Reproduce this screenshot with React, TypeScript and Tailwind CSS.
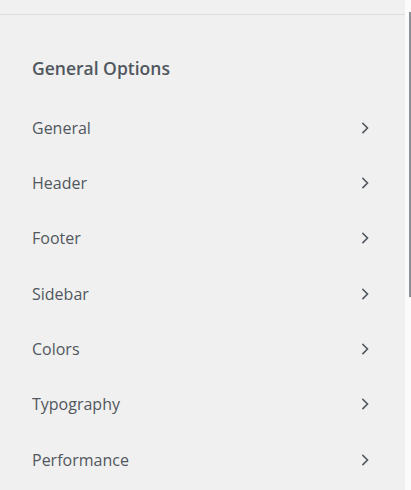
import React from 'react';

const items = ['General', 'Header', 'Footer', 'Sidebar', 'Colors', 'Typography', 'Performance'];

const Chevron = () => (
  <svg width="10" height="12" viewBox="0 0 10 12" fill="none" className="text-[#50575e]">
    <path d="M3 1.5l4.5 4.5-4.5 4.5" stroke="currentColor" strokeWidth="1.6" strokeLinecap="square" />
  </svg>
);

export default function App() {
  return (
    <div className="relative flex w-[411px] h-[490px] overflow-hidden bg-[#fbfbfb] font-['Open_Sans',sans-serif]">
      {/* customizer panel */}
      <div className="w-[405px] h-full bg-[#f0f0f0] flex flex-col">
        <div className="h-[15px] border-b border-[#dcdcde]" />
        <h3 className="pl-[32px] pt-[41px] pb-[20px] text-[17.5px] leading-[24px] font-semibold text-[#50575e]">
          General Options
        </h3>
        <ul>
          {items.map((item) => (
            <li
              key={item}
              className="h-[55.33px] flex items-center justify-between pl-[32px] pr-[35px] text-[16px] text-[#50575e]"
            >
              <span>{item}</span>
              <Chevron />
            </li>
          ))}
        </ul>
      </div>
      {/* scrollbar thumb */}
      <div className="absolute left-[409px] top-[12px] w-[2px] h-[285px] bg-[#8c8f94]" />
    </div>
  );
}
